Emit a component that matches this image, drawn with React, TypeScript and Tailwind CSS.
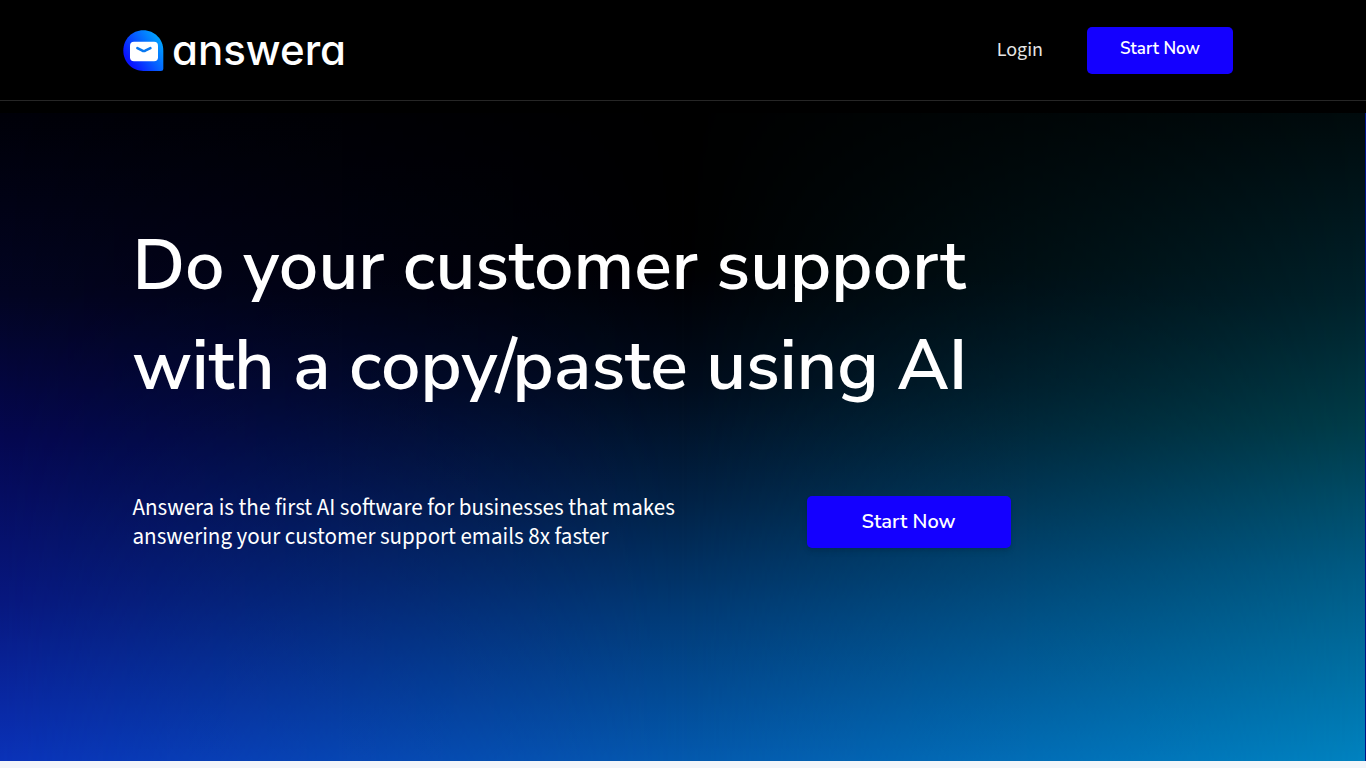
import React from 'react';

const headingFont = "font-['Nunito_Sans','Nunito','Lato',sans-serif]";
const bodyFont = "font-['Source_Sans_3','Noto_Sans_CJK_SC',sans-serif]";

const LogoMark: React.FC = () => (
  <svg className="h-[42px] w-[41px] shrink-0" viewBox="0 0 41 42" aria-hidden="true">
    <defs>
      <linearGradient id="mark" x1="0.15" y1="0.75" x2="0.95" y2="0.2">
        <stop offset="0" stopColor="#0a14ff" />
        <stop offset="0.5" stopColor="#0560ff" />
        <stop offset="1" stopColor="#00a8ff" />
      </linearGradient>
    </defs>
    <path
      d="M20.3 1.2C31.5 1.2 40.3 10.2 40.3 21.2V39.4Q40.3 41.9 37.8 41.9H20.3C9 41.9 0.3 32.9 0.3 21.5C0.3 10.2 9 1.2 20.3 1.2Z"
      fill="url(#mark)"
    />
    <rect x="7" y="12.8" width="28" height="19.4" rx="4" fill="#fff" />
    <path
      d="M14.4 19.2L19.4 21.7Q20.8 22.3 22.2 21.7L27.4 19.2"
      fill="none"
      stroke="#0878f0"
      strokeWidth="2.6"
      strokeLinecap="round"
      strokeLinejoin="round"
    />
  </svg>
);

const App: React.FC = () => {
  return (
    <div className="min-h-screen bg-[#f3f5f9] text-white">
      {/* Header */}
      <header className="border-b border-[#262626] bg-black">
        <div className="mx-auto flex h-[100px] max-w-[1120px] items-center justify-between pr-[10px]">
          <a href="#" className="flex items-center gap-2" aria-label="answera">
            <LogoMark />
            <span className="font-['Inter',sans-serif] text-[42px] leading-[42px] font-medium [font-feature-settings:'cv11']">
              answera
            </span>
          </a>
          <nav className="flex items-center gap-11">
            <a href="#" className={`${bodyFont} text-[20px] leading-7 text-[#e6e6e6]`}>
              Login
            </a>
            <button
              type="button"
              className={`${headingFont} h-[47px] w-[146px] rounded-[5px] bg-[#1400ff] pb-0.5 text-[17px] font-semibold`}
            >
              Start Now
            </button>
          </nav>
        </div>
      </header>

      {/* Hero */}
      <main className="bg-black pt-3">
        <section className="relative isolate border-r border-[#001488] bg-[linear-gradient(to_bottom,#000_0%,#000002_24%,#010c1c_42%,#022246_60%,#023c78_78%,#0459ae_100%)]">
          {/* Side glows, faded towards the middle */}
          <div className="absolute inset-y-0 left-0 -z-10 w-1/2 bg-[linear-gradient(to_bottom,#000008_0%,#020422_28%,#040750_50%,#07177e_75%,#0a32b8_100%)] [mask-image:linear-gradient(to_right,#000,transparent)]" />
          <div className="absolute inset-y-0 right-0 -z-10 w-1/2 bg-[linear-gradient(to_bottom,#000a0c_0%,#00212a_28%,#003c48_48%,#005a82_70%,#0082bf_100%)] [mask-image:linear-gradient(to_left,#000,transparent)]" />
          <div className="mx-auto max-w-[1120px] pt-[103px] pb-[210px] pl-[10px]">
            <h1 className={`${headingFont} text-[70px] leading-[100px] font-semibold`}>
              Do your customer support
              <br />
              with a copy/paste using AI
            </h1>
            <div className="mt-[77px] flex items-center gap-[114px]">
              <p className={`${bodyFont} w-[560px] text-[23px] leading-[29px]`}>
                Answera is the first AI software for businesses that makes answering your customer
                support emails 8x faster
              </p>
              <button
                type="button"
                className={`${headingFont} h-[52px] w-[204px] rounded-[5px] bg-[#1400ff] text-[20px] font-semibold shadow-md`}
              >
                Start Now
              </button>
            </div>
          </div>
        </section>
      </main>
    </div>
  );
};

export default App;
